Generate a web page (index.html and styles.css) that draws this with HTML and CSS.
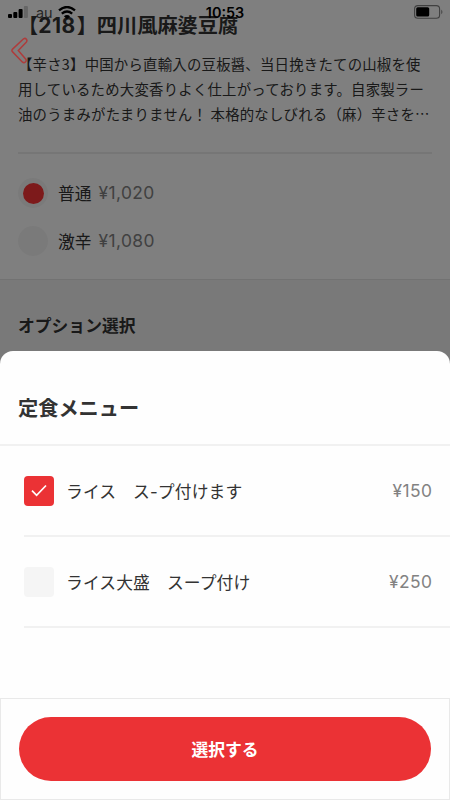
FILE: index.html
```
<!DOCTYPE html>
<html lang="ja">
<head>
<meta charset="utf-8">
<title>定食メニュー</title>
<link rel="stylesheet" href="styles.css">
</head>
<body>
<div class="screen">
  <main class="product">
    <h1 class="product-title">【<span class="number">218</span>】四川風麻婆豆腐</h1>
    <p class="description"><span>【辛さ3】中国から直輸入の豆板醤、当日挽きたての山椒を使</span><span>用しているため大変香りよく仕上がっております。自家製ラー</span><span>油のうまみがたまりません！ 本格的なしびれる（麻）辛さを⋯</span></p>
    <div class="choices">
      <div class="choice"><i class="radio selected"></i><span class="choice-name">普通</span><span class="choice-price">¥1,020</span></div>
      <div class="choice"><i class="radio"></i><span class="choice-name">激辛</span><span class="choice-price">¥1,080</span></div>
    </div>
  </main>
  <section class="options"><h2>オプション選択</h2></section>
  <div class="scrim"></div>
  <svg class="back" width="18" height="28" viewBox="0 0 18 28"><path d="M12.6 1.8 1.6 12.1q-1.4 1.4 0 2.8L11.3 24.9q1.6 1.4 3.1.1t.2-3L7.3 13.5 15.2 5.2q1.4-1.6.2-3t-2.8-.4Z" fill="none" stroke="#ae3c3c" stroke-width="1.5"/></svg>
  <header class="status">
    <svg class="signal" width="21" height="13" viewBox="0 0 21 13"><rect x="0" y="8" width="4" height="4" rx="1"/><rect x="5.3" y="6" width="4" height="6" rx="1"/><rect x="10.6" y="3" width="4" height="9" rx="1"/><rect x="15.9" y="0" width="4" height="12" rx="1" fill="#666"/></svg>
    <span class="carrier">au</span>
    <svg class="wifi" width="18" height="14" viewBox="0 0 18 14"><path d="M1 4.4Q9-2.4 17 4.4M3.8 7.6q5.2-4.3 10.4 0" fill="none" stroke="#000" stroke-width="2.3"/><path d="M5.9 10.2q3.1-2.2 6.2 0L9 13.2Z"/></svg>
    <span class="time">10:53</span>
    <svg class="battery" width="29" height="14" viewBox="0 0 29 14"><rect x=".6" y=".6" width="25" height="12.6" rx="3.3" fill="none" stroke="#404040" stroke-width="1.1"/><rect x="2.2" y="2.3" width="13" height="9.2" rx="1.5"/><path d="M27.3 4.6q2.2 2.3 0 4.6Z" fill="#404040"/></svg>
  </header>
  <section class="sheet">
    <h2 class="sheet-title">定食メニュー</h2>
    <div class="menu">
      <div class="menu-row"><i class="checkbox checked"><svg width="16" height="13" viewBox="0 0 16 13"><path d="m1 6.6 4.6 4.7L15 1.5" fill="none" stroke="#fff" stroke-width="1.7"/></svg></i><span class="menu-name">ライス　ス<span class="dash">-</span>プ付けます</span><span class="menu-price">¥150</span></div>
      <div class="menu-row"><i class="checkbox"></i><span class="menu-name">ライス大盛　スープ付け</span><span class="menu-price">¥250</span></div>
    </div>
    <footer class="actions"><button class="submit">選択する</button></footer>
  </section>
</div>
</body>
</html>
```
FILE: styles.css
```
* { box-sizing: border-box; }
body { margin: 0; font-family: "Noto Sans CJK JP", sans-serif; color: #333; }
h1, h2, p { margin: 0; }
i { display: block; flex: none; }
.screen { position: relative; width: 450px; height: 800px; overflow: hidden; display: flex; flex-direction: column; background: #fff; }
.product { height: 279px; flex: none; padding: 10px 18px 0; }
.product-title { font-size: 20.2px; line-height: 29px; height: 29px; font-weight: 700; white-space: nowrap; }
.number { font-family: Inter, sans-serif; font-size: 21px; letter-spacing: .5px; margin-right: 1px; }
.description { display: flex; flex-direction: column; height: 115px; padding-top: 12px; border-bottom: 2px solid #ededed; font-size: 14.4px; line-height: 25px; letter-spacing: .22px; white-space: nowrap; }
.choices { padding-top: 15px; }
.choice { display: flex; align-items: center; height: 48px; font-size: 16.8px; }
.radio { display: grid; place-items: center; width: 30px; height: 30px; border-radius: 50%; background: #f5f5f5; }
.selected::after { content: ""; width: 21px; height: 21px; border-radius: 50%; background: #fb3436; }
.choice-name { margin-left: 10px; }
.choice-price { margin-left: 7px; margin-top: -1px; }
.choice-price, .menu-price { font-family: Inter, sans-serif; color: #828282; font-size: 17.4px; letter-spacing: .4px; }
.options { flex: 1; background: #f3f3f3; border-top: 1px solid #e4e4e4; padding: 33px 18px; }
.options h2 { font-size: 16.8px; line-height: 25px; }
.back { position: absolute; left: 11px; top: 37px; }
.scrim { position: absolute; inset: 0; background: rgba(0, 0, 0, .5); }
.status { position: absolute; top: 0; left: 0; width: 100%; height: 25px; padding: 0 7px 0 8px; display: grid; grid-template-columns: 28px 22px 1fr auto; align-items: center; color: #000; font-family: Inter, sans-serif; font-size: 14.4px; }
.carrier { color: #262626; }
.time { position: absolute; left: 0; right: 0; text-align: center; font-weight: 600; font-size: 14.4px; }
.battery { margin-top: -1px; }
.sheet { position: absolute; left: 0; right: 0; top: 351px; bottom: 0; display: flex; flex-direction: column; background: #fefefe; border-radius: 13px 13px 0 0; }
.sheet-title { height: 95px; padding: 41px 18px 0; font-size: 20.2px; line-height: 32px; border-bottom: 2px solid #f1f1f1; }
.menu { flex: 1; padding-left: 24px; }
.menu-row { display: flex; align-items: center; height: 91px; padding-right: 18px; border-bottom: 2px solid #f1f1f1; }
.checkbox { display: grid; place-items: center; width: 30px; height: 30px; border-radius: 4px; background: #f5f5f5; }
.checked { background: #eb3235; }
.menu-name { flex: 1; margin-left: 12px; font-size: 16.8px; letter-spacing: .12px; white-space: pre; }
.dash { font-family: Inter, sans-serif; }
.menu-price { margin-right: -.4px; }
.actions { height: 102px; padding: 18px; border: 1px solid #e9e9e9; }
.submit { display: block; width: 100%; height: 64px; border: 0; border-radius: 32px; background: #eb3235; color: #fff; font-family: inherit; font-size: 16.8px; font-weight: 700; }
```
